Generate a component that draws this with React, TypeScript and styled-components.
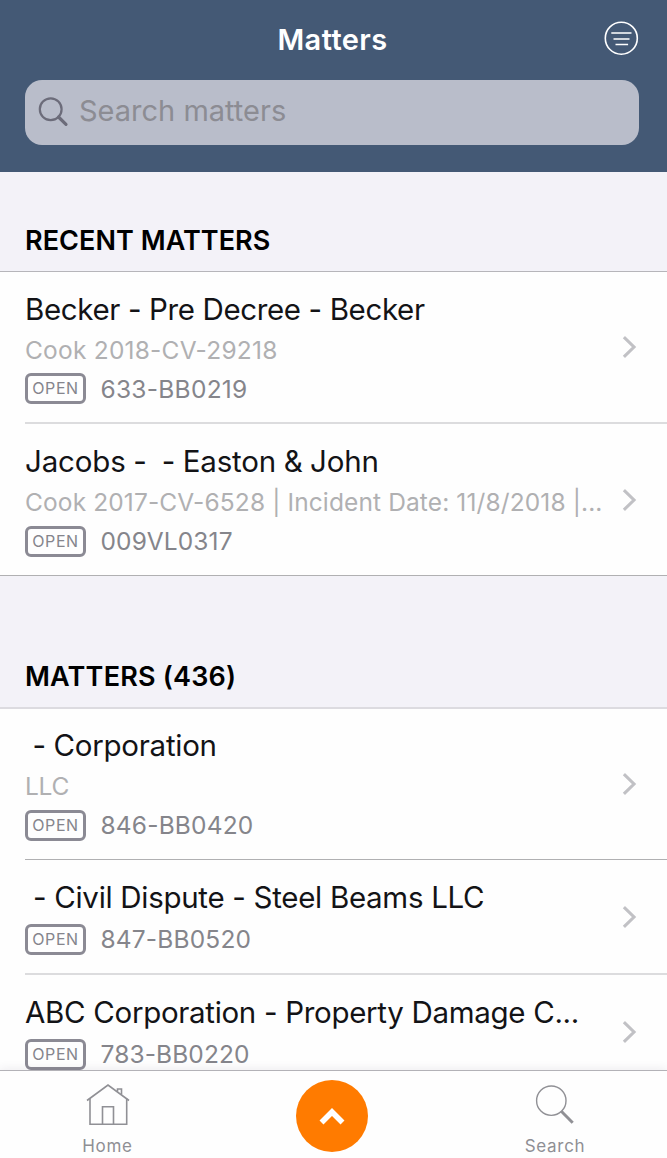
import React from "react";
import styled, { createGlobalStyle } from "styled-components";

const GlobalStyle = createGlobalStyle`
  *, *::before, *::after { box-sizing: border-box; }
  body {
    margin: 0;
    background: #fefefe;
    font-family: Inter, "Liberation Sans", sans-serif;
    -webkit-font-smoothing: antialiased;
  }
`;

const Screen = styled.div`
  display: flex;
  flex-direction: column;
  width: 667px;
  height: 1158px;
  overflow: hidden;
  background: #fefefe;
`;

const Header = styled.header`
  flex: none;
  height: 172px;
  padding: 0 28px 0 25px;
  background: #445975;
`;

const TitleBar = styled.div`
  display: grid;
  grid-template-columns: 1fr auto 1fr;
  align-items: center;
  height: 80px;
`;

const Title = styled.h1`
  grid-column: 2;
  margin: 0;
  padding-left: 1px;
  font-size: 29px;
  font-weight: 600;
  line-height: 80px;
  letter-spacing: 0.4px;
  color: #fff;
`;

const FilterButton = styled.button`
  justify-self: end;
  display: flex;
  margin: 0 0 3px;
  padding: 0;
  border: 0;
  background: none;
`;

const SearchBox = styled.div`
  display: flex;
  align-items: center;
  height: 65px;
  padding-left: 13px;
  border-radius: 17px;
  background: #b9bdca;
`;

const Placeholder = styled.span`
  margin: 0 0 3px 10px;
  font-size: 29px;
  line-height: 40px;
  color: #8c8c93;
`;

const List = styled.main`
  flex: 1;
  min-height: 0;
  overflow: hidden;
`;

const SectionHeader = styled.h2<{ $height: number; $tracking: number; $soft?: boolean }>`
  display: flex;
  align-items: flex-end;
  height: ${(p) => p.$height}px;
  margin: 0;
  padding: 0 25px 10px;
  border-bottom: ${(p) => (p.$soft ? "2px solid #dcdbe0" : "1px solid #b6b5ba")};
  background: #f3f2f8;
  font-size: 27px;
  font-weight: 600;
  line-height: 40px;
  letter-spacing: ${(p) => p.$tracking}px;
  color: #000;
`;

type Line = "soft" | "crisp" | "full";

const Row = styled.article<{ $line: Line; $height: number }>`
  display: flex;
  align-items: center;
  height: ${(p) => p.$height}px;
  margin-left: ${(p) => (p.$line === "full" ? 0 : 25)}px;
  padding-left: ${(p) => (p.$line === "full" ? 25 : 0)}px;
  padding-right: 30px;
  border-bottom: ${(p) => (p.$line === "soft" ? "2px solid #dcdcde" : "1px solid #b0b0b2")};
`;

const RowBody = styled.div<{ $top: number }>`
  flex: 1;
  min-width: 0;
  align-self: flex-start;
  padding-top: ${(p) => p.$top}px;
`;

const MatterName = styled.div<{ $tracking: number; $gap?: number }>`
  font-size: 29.5px;
  line-height: 40px;
  letter-spacing: ${(p) => p.$tracking}px;
  word-spacing: ${(p) => p.$gap ?? 0}px;
  white-space: pre;
  color: #131316;
`;

const Detail = styled.div<{ $tracking: number }>`
  height: 38px;
  font-size: 24.5px;
  line-height: 42px;
  letter-spacing: ${(p) => p.$tracking}px;
  white-space: pre;
  color: #b0b0b2;
`;

const Meta = styled.div`
  display: flex;
  align-items: center;
  height: 44px;
`;

const Badge = styled.span`
  display: flex;
  align-items: center;
  justify-content: center;
  width: 61px;
  height: 31px;
  padding-bottom: 1px;
  border: 3px solid #8b8a94;
  border-radius: 6px;
  font-size: 16px;
  letter-spacing: 0.6px;
  color: #85858c;
`;

const Code = styled.span<{ $tracking: number }>`
  margin-left: 14.5px;
  font-size: 24.5px;
  line-height: 40px;
  letter-spacing: ${(p) => p.$tracking}px;
  color: #85858b;
`;

const TabBar = styled.nav`
  position: relative;
  flex: none;
  display: grid;
  grid-template-columns: 215px 234px 212px;
  height: 88px;
  border-top: 1px solid #b3b2b7;
  background: #fefefe;
  box-shadow: 0 -2px 8px rgba(60, 50, 90, 0.08);
`;

const Tab = styled.div`
  display: flex;
  flex-direction: column;
  align-items: center;
  padding-top: 11px;
  gap: 8px;
  font-size: 17px;
  line-height: 24px;
  letter-spacing: 0.7px;
  color: #8f8f94;
`;

const ActionCell = styled.div`
  display: flex;
  justify-content: center;
  padding-top: 9px;
`;

const ActionButton = styled.button`
  display: flex;
  width: 72px;
  height: 72px;
  padding: 0;
  border: 0;
  border-radius: 50%;
  background: #ff7b00;
`;

const Chevron = () => (
  <svg width="15" height="24" viewBox="0 0 15 24" fill="none">
    <path d="M1.9 2.2 L12 12 L1.9 21.8" stroke="#c1c1c5" strokeWidth="3.1" />
  </svg>
);

interface Matter {
  name: string;
  nameTracking: number;
  nameGap?: number;
  detail?: string;
  detailTracking?: number;
  code: string;
  codeTracking: number;
  line: Line;
  height: number;
  top: number;
}

const recent: Matter[] = [
  { name: "Becker - Pre Decree - Becker", nameTracking: -0.37, detail: "Cook 2018-CV-29218", detailTracking: 0.22, code: "633-BB0219", codeTracking: 0.27, line: "soft", height: 152, top: 16.8 },
  { name: "Jacobs -  - Easton & John", nameTracking: -0.15, nameGap: -0.6, detail: "Cook 2017-CV-6528 | Incident Date: 11/8/2018 |...", detailTracking: 0.12, code: "009VL0317", codeTracking: 0.12, line: "full", height: 152, top: 17 },
];

const matters: Matter[] = [
  { name: " - Corporation", nameTracking: -0.25, nameGap: -0.5, detail: "LLC", detailTracking: -0.3, code: "846-BB0420", codeTracking: 0.17, line: "crisp", height: 151, top: 16 },
  { name: " - Civil Dispute - Steel Beams LLC", nameTracking: -0.3, code: "847-BB0520", codeTracking: 0.17, line: "soft", height: 115, top: 17 },
  { name: "ABC Corporation - Property Damage C...", nameTracking: -0.31, code: "783-BB0220", codeTracking: 0.12, line: "crisp", height: 115, top: 17 },
];

const MatterRow = ({ matter }: { matter: Matter }) => (
  <Row $line={matter.line} $height={matter.height}>
    <RowBody $top={matter.top}>
      <MatterName $tracking={matter.nameTracking} $gap={matter.nameGap}>{matter.name}</MatterName>
      {matter.detail && <Detail $tracking={matter.detailTracking ?? 0}>{matter.detail}</Detail>}
      <Meta>
        <Badge>OPEN</Badge>
        <Code $tracking={matter.codeTracking}>{matter.code}</Code>
      </Meta>
    </RowBody>
    <Chevron />
  </Row>
);

export default function App() {
  return (
    <Screen>
      <GlobalStyle />
      <Header>
        <TitleBar>
          <Title>Matters</Title>
          <FilterButton aria-label="Filter">
            <svg width="36" height="36" viewBox="0 0 36 36" fill="none" stroke="#fff" strokeWidth="1.6">
              <circle cx="18.3" cy="17.2" r="16" />
              <path d="M8.3 12h20.2M10.5 18h16M12.5 23.5h12.6" />
            </svg>
          </FilterButton>
        </TitleBar>
        <SearchBox>
          <svg width="31" height="31" viewBox="0 0 31 31" fill="none" stroke="#6c6c7a">
            <circle cx="12.7" cy="12.2" r="10.9" strokeWidth="2.2" />
            <path d="M20.5 20 L28 27.4" strokeWidth="3.2" strokeLinecap="round" />
          </svg>
          <Placeholder>Search matters</Placeholder>
        </SearchBox>
      </Header>
      <List>
        <SectionHeader $height={100} $tracking={0.05}>RECENT MATTERS</SectionHeader>
        {recent.map((m) => <MatterRow key={m.code} matter={m} />)}
        <SectionHeader $height={133} $tracking={0.2} $soft>MATTERS (436)</SectionHeader>
        {matters.map((m) => <MatterRow key={m.code} matter={m} />)}
      </List>
      <TabBar>
        <Tab>
          <svg width="44" height="44" viewBox="0 0 44 44" fill="none" stroke="#909095" strokeWidth="1.6">
            <path d="M1 18.5 L22 3 L43 18.5" />
            <path d="M4 16.5 V42.3 H40.7 V16.5" />
            <path d="M16.5 42 V24.8 H27.5 V42" />
            <path d="M31.5 9.5 V7 H35.5 V12.5" />
          </svg>
          Home
        </Tab>
        <ActionCell>
          <ActionButton aria-label="Open menu">
            <svg width="72" height="72" viewBox="0 0 72 72" fill="none">
              <path d="M25.5 42.5 L36 32 L46.5 42.5" stroke="#fff" strokeWidth="5.6" />
            </svg>
          </ActionButton>
        </ActionCell>
        <Tab>
          <svg width="44" height="44" viewBox="0 0 44 44" fill="none" stroke="#909095">
            <circle cx="18.3" cy="18.7" r="14.7" strokeWidth="1.4" />
            <path d="M28.3 29.3 L39.7 40.7" strokeWidth="3" />
          </svg>
          Search
        </Tab>
      </TabBar>
    </Screen>
  );
}
